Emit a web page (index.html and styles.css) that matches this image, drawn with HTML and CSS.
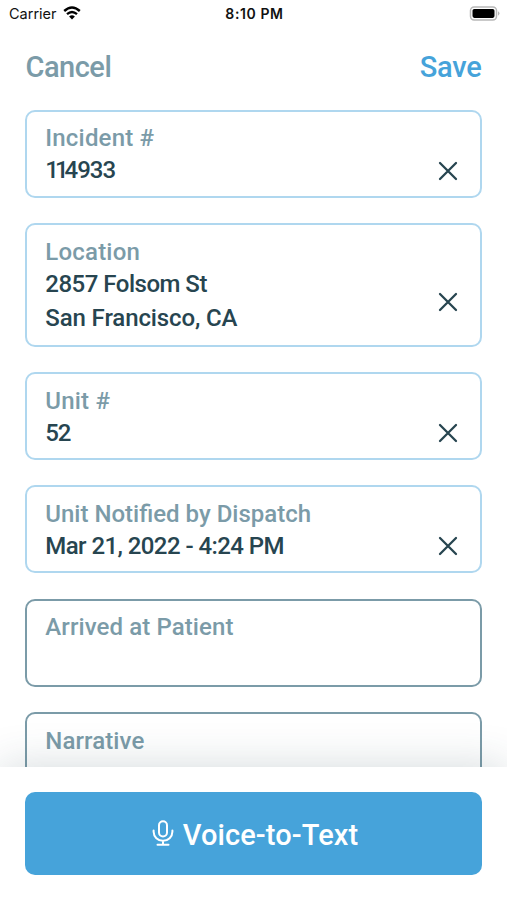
FILE: index.html
```html
<!DOCTYPE html>
<html lang="en">
<head>
<meta charset="utf-8">
<meta name="viewport" content="width=device-width, initial-scale=1">
<title>Incident</title>
<link rel="stylesheet" href="styles.css">
</head>
<body>
<div class="screen">
  <header class="status">
    <div class="carrier"><span>Carrier</span>
      <svg class="wifi" viewBox="0 0 18 14"><path d="M1.2 5Q9-2.2 16.8 5" fill="none" stroke="#000" stroke-width="2.4"/><path d="M4 8.2Q9 3.7 14 8.2" fill="none" stroke="#000" stroke-width="2.3"/><path d="M6.1 10.4Q9 7.9 11.9 10.4L9 13.5Z"/></svg>
    </div>
    <div class="time">8:10 PM</div>
    <svg class="battery" viewBox="0 0 31 15"><rect x="1.5" y=".9" width="26" height="13" rx="3.6" fill="#fff" stroke="#b8b8b8" stroke-width="1.5"/><rect x="3.5" y="2.9" width="22" height="9" rx="1.8"/><path d="M29 5.3q3 2.2 0 4.4z" fill="#b8b8b8"/></svg>
  </header>
  <nav class="nav"><span class="cancel">Cancel</span><span class="save">Save</span></nav>
  <main class="form">
    <section class="field">
      <div class="label t-incident">Incident #</div>
      <div class="value t-number"><span class="ones">11</span>4933</div>
      <svg class="clear" viewBox="0 0 20 20"><path d="M2 2L18 18M18 2L2 18"/></svg>
    </section>
    <section class="field tall">
      <div class="label t-location">Location</div>
      <div class="value t-street">2857 Folsom St</div>
      <div class="value second t-city">San Francisco, CA</div>
      <svg class="clear" viewBox="0 0 20 20"><path d="M2 2L18 18M18 2L2 18"/></svg>
    </section>
    <section class="field">
      <div class="label t-unit">Unit #</div>
      <div class="value t-unitno">52</div>
      <svg class="clear" viewBox="0 0 20 20"><path d="M2 2L18 18M18 2L2 18"/></svg>
    </section>
    <section class="field">
      <div class="label t-notified">Unit Notified by Dispatch</div>
      <div class="value t-date">Mar 21, 2022 - 4:24 PM</div>
      <svg class="clear" viewBox="0 0 20 20"><path d="M2 2L18 18M18 2L2 18"/></svg>
    </section>
    <section class="field empty"><div class="label t-arrived">Arrived at Patient</div></section>
    <section class="field empty"><div class="label t-narrative">Narrative</div></section>
  </main>
  <footer class="footer">
    <button class="voice">
      <svg class="mic" viewBox="0 0 22 26"><rect x="7" y="1.2" width="8" height="15.3" rx="4"/><path d="M1.6 10.5v1.3a9.4 9 0 0 0 18.8 0v-1.3M11 20.9v3.6M5.5 24.7h11"/></svg>
      <span>Voice-to-Text</span>
    </button>
  </footer>
</div>
</body>
</html>
```
FILE: styles.css
```css
* { box-sizing: border-box; }
body { margin: 0; background: #fff; font-family: Roboto, "Liberation Sans", sans-serif; font-weight: 500; }
.screen { display: flex; flex-direction: column; height: 900px; overflow: hidden; }
.status { flex: none; height: 27px; display: grid; grid-template-columns: 1fr auto 1fr; align-items: center; padding: 0 7px 0 9px; font-family: Inter, sans-serif; color: #111; }
.carrier { display: flex; align-items: center; gap: 6px; font-size: 14.5px; font-weight: 400; }
.wifi { width: 18px; height: 14px; margin-top: -1px; }
.time { font-size: 14px; font-weight: 600; letter-spacing: .6px; }
.battery { width: 31px; height: 15px; justify-self: end; margin-top: -1px; }
.nav { flex: none; height: 82.7px; padding: 23px 25.5px 0; display: flex; justify-content: space-between; font-size: 29px; line-height: 34px; }
.cancel { color: #7b9ba8; letter-spacing: -.5px; }
.save { color: #46a3da; letter-spacing: -.25px; }
.form { flex: none; height: 657.3px; overflow: hidden; padding: 0 25px; display: flex; flex-direction: column; gap: 25.4px; }
.field { flex: none; position: relative; height: 88px; border: 2px solid #afd7ef; border-radius: 10px; padding: 10.5px 18.3px; }
.tall { height: 123.6px; }
.empty { border-color: #7b9ba8; }
.label, .value { height: 32px; font-size: 24px; line-height: 32px; white-space: nowrap; }
.label { color: #7b9ba8; }
.value { color: #274550; }
.second { margin-top: 2px; }
.t-incident, .t-unit, .t-location { letter-spacing: .2px; }
.t-arrived, .t-narrative { letter-spacing: .1px; }
.t-number { letter-spacing: -1px; }
.ones { letter-spacing: -4px; }
.t-street { letter-spacing: -.5px; }
.t-city { letter-spacing: -.12px; }
.t-unitno { letter-spacing: -1.2px; }
.t-date { letter-spacing: -.57px; }
.clear { position: absolute; right: 22px; bottom: 15px; width: 20px; height: 20px; fill: none; stroke: #274550; stroke-width: 2.3; stroke-linecap: round; }
.tall .clear { bottom: 33px; }
.footer { flex: 1; position: relative; background: #fff; padding: 25px; box-shadow: 0 0 42px rgba(39, 69, 80, .2); }
.voice { width: 100%; height: 83.5px; border: 0; border-radius: 10px; background: #46a3da; color: #fff; display: flex; align-items: center; justify-content: center; gap: 9px; font: 500 29px/34px Roboto, sans-serif; letter-spacing: .1px; padding: 3px 0 0 3px; }
.mic { width: 22px; height: 26px; margin-top: -4px; fill: none; stroke: #fff; stroke-width: 2; stroke-linecap: round; }
```
